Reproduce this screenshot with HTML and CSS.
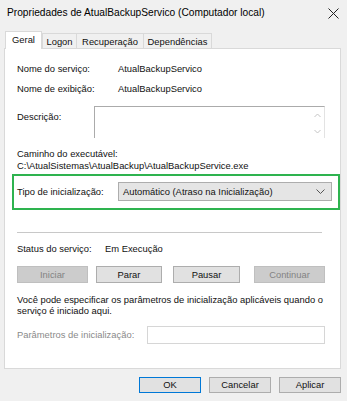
FILE: index.html
```html
<!DOCTYPE html>
<html lang="pt-BR">
<head>
  <meta charset="UTF-8" />
  <title>Propriedades de AtualBackupServico</title>
  <link rel="stylesheet" href="styles.css">
</head>
<body>
  <div class="janela">
    <div class="titulo">
      <span>Propriedades de AtualBackupServico (Computador local)</span>
      <svg class="fechar" width="11" height="11" viewBox="0 0 11 11">
        <path d="M0.5 0.5 L10.5 10.5 M10.5 0.5 L0.5 10.5" stroke="#222" stroke-width="1" fill="none"/>
      </svg>
    </div>

    <div class="abas">
      <div class="aba ativa">Geral</div>
      <div class="aba aba-logon">Logon</div>
      <div class="aba aba-recup">Recuperação</div>
      <div class="aba aba-dep">Dependências</div>
    </div>

    <div class="painel">
      <div class="linha primeira">
        <span class="rotulo">Nome do serviço:</span>
        <span>AtualBackupServico</span>
      </div>
      <div class="linha segunda">
        <span class="rotulo">Nome de exibição:</span>
        <span>AtualBackupServico</span>
      </div>
      <div class="linha-descricao">
        <span class="rotulo-desc">Descrição:</span>
        <div class="caixa-desc">
          <div class="rolagem">
            <svg width="7" height="5" viewBox="0 0 7 5"><path d="M0.5 4 L3.5 1 L6.5 4" stroke="#c4c4c4" fill="none"/></svg>
            <svg width="7" height="5" viewBox="0 0 7 5"><path d="M0.5 1 L3.5 4 L6.5 1" stroke="#c4c4c4" fill="none"/></svg>
          </div>
        </div>
      </div>
      <div class="caminho-rotulo">Caminho do executável:</div>
      <div class="caminho">C:\AtualSistemas\AtualBackup\AtualBackupService.exe</div>

      <div class="destaque">
        <span class="rotulo">Tipo de inicialização:</span>
        <div class="combo">
          <span>Automático (Atraso na Inicialização)</span>
          <svg width="9" height="5" viewBox="0 0 9 5"><path d="M0.5 0.5 L4.5 4.5 L8.5 0.5" stroke="#555" fill="none"/></svg>
        </div>
      </div>

      <div class="separador"></div>

      <div class="linha status">
        <span class="rotulo-status">Status do serviço:</span>
        <span>Em Execução</span>
      </div>

      <div class="botoes">
        <div class="botao desativado b-iniciar">Iniciar</div>
        <div class="botao b-parar">Parar</div>
        <div class="botao b-pausar">Pausar</div>
        <div class="botao desativado b-continuar">Continuar</div>
      </div>

      <p class="aviso">Você pode especificar os parâmetros de inicialização aplicáveis quando o serviço é iniciado aqui.</p>

      <div class="parametros">
        <span class="rotulo-param">Parâmetros de inicialização:</span>
        <div class="campo"></div>
      </div>
    </div>

    <div class="rodape">
      <div class="botao b-rodape ok">OK</div>
      <div class="botao b-rodape">Cancelar</div>
      <div class="botao b-rodape">Aplicar</div>
    </div>
  </div>
</body>
</html>
```

FILE: styles.css
```css
body {
  margin: 0;
  background-color: #f0f0f0;
  font-family: 'Liberation Sans', Arial, sans-serif;
  font-size: 9.4px;
  color: #111;
}

.janela {
  width: 347px;
  height: 401px;
  overflow: hidden;
}

.titulo {
  height: 25px;
  display: flex;
  align-items: center;
  justify-content: space-between;
  padding: 0 8px 0 7px;
  font-size: 10.2px;
  color: #000;
}

.fechar {
  margin-top: 1px;
}

.abas {
  display: flex;
  align-items: flex-end;
  margin-left: 5px;
  margin-top: 6px;
  height: 17px;
  position: relative;
  z-index: 2;
}

.aba {
  height: 15px;
  line-height: 15px;
  border: 1px solid #d9d9d9;
  border-bottom: none;
  margin-left: -1px;
  box-sizing: border-box;
  background-color: #f0f0f0;
  text-align: center;
}

.aba.ativa {
  width: 37px;
  height: 18px;
  line-height: 16px;
  background-color: #fff;
  margin-left: 0;
  margin-bottom: -1px;
}

.aba-logon { width: 35px; margin-left: 0; }
.aba-recup { width: 68px; }
.aba-dep { width: 69px; }

.painel {
  margin: 0 6px 0 4px;
  height: 321px;
  box-sizing: border-box;
  background-color: #fff;
  border: 1px solid #d9d9d9;
  padding: 0 15px 0 12px;
  display: flex;
  flex-direction: column;
}

.linha {
  display: flex;
  height: 12px;
  line-height: 12px;
}

.rotulo {
  width: 101px;
  flex-shrink: 0;
}

.primeira {
  margin-top: 14px;
}

.segunda {
  margin-top: 8px;
}

.linha-descricao {
  display: flex;
  margin-top: 11px;
  height: 32px;
}

.rotulo-desc {
  width: 77px;
  margin-top: 5px;
  line-height: 12px;
}

.caixa-desc {
  flex: 1;
  border: 1px solid #ababab;
  border-right-color: #e3e3e3;
  border-bottom: none;
  display: flex;
  justify-content: flex-end;
}

.rolagem {
  width: 13px;
  display: flex;
  flex-direction: column;
  justify-content: space-between;
  align-items: center;
  padding: 6px 0 4px;
  background-color: #fff;
}

.caminho-rotulo {
  margin-top: 10px;
  line-height: 12px;
}

.caminho {
  line-height: 12px;
}

.destaque {
  margin: 2px -15px 0 -5px;
  height: 36px;
  box-sizing: border-box;
  border: 2px solid #2eb34f;
  padding: 6px 6px 0 3px;
  display: flex;
}

.destaque .rotulo {
  line-height: 19px;
}

.combo {
  width: 214px;
  height: 19px;
  box-sizing: border-box;
  background-color: #e5e5e5;
  border: 1px solid #adadad;
  display: flex;
  align-items: center;
  justify-content: space-between;
  padding: 0 6px 0 4px;
}

.separador {
  margin-top: 22px;
  height: 1px;
  background-color: #c8c8c8;
  margin-right: 3px;
}

.status {
  margin-top: 10px;
}

.rotulo-status {
  width: 88px;
}

.botoes {
  display: flex;
  margin-top: 11px;
  height: 17px;
}

.botao {
  box-sizing: border-box;
  height: 17px;
  line-height: 15px;
  text-align: center;
  background-color: #e1e1e1;
  border: 1px solid #adadad;
}

.botao.desativado {
  background-color: #cccccc;
  border-color: #bfbfbf;
  color: #838383;
}

.b-iniciar { width: 71px; }
.b-parar { width: 66px; margin-left: 8px; }
.b-pausar { width: 67px; margin-left: 11px; }
.b-continuar { width: 71px; margin-left: 14px; }

.aviso {
  margin: 11px 0 0;
  line-height: 11px;
}

.parametros {
  display: flex;
  margin-top: 10px;
  height: 18px;
}

.rotulo-param {
  width: 130px;
  color: #8a8a8a;
  line-height: 18px;
}

.campo {
  flex: 1;
  border: 1px solid #d6d6d6;
  background-color: #fff;
}

.rodape {
  display: flex;
  justify-content: flex-end;
  gap: 8px;
  margin: 8px 6px 0 0;
}

.b-rodape {
  width: 62px;
  height: 16px;
  line-height: 14px;
}

.b-rodape.ok {
  border-color: #0078d7;
}
```
